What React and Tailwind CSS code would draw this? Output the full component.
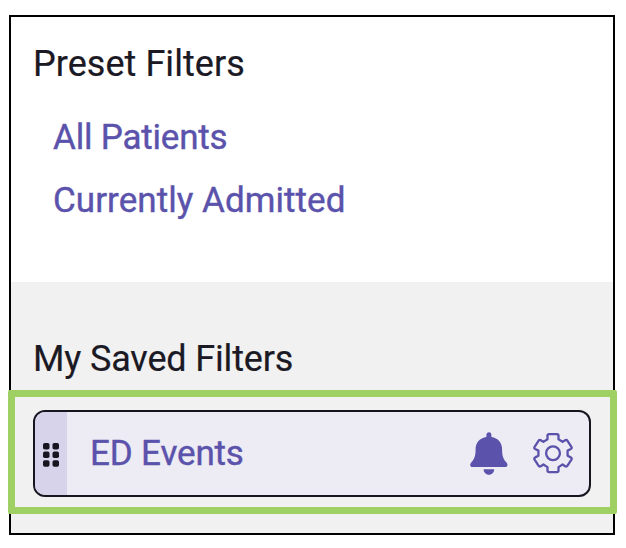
import clsx from "clsx";

const presetFilters = [
  { label: "All Patients", tracking: "tracking-[-0.2px]" },
  { label: "Currently Admitted", tracking: "tracking-[0.05px]" },
];

function DragHandle() {
  return (
    <div className="flex w-8 shrink-0 items-center justify-center bg-[#d6d3ea]">
      <svg width="16" height="24" viewBox="0 0 16 24" className="mt-[3px]" fill="#17151f">
        {[0, 8.6, 17.2].map((y) => (
          <g key={y}>
            <rect x="0" y={y} width="6.5" height="6.5" rx="1.8" />
            <rect x="9.5" y={y} width="6.5" height="6.5" rx="1.8" />
          </g>
        ))}
      </svg>
    </div>
  );
}

function BellIcon() {
  return (
    <svg width="38" height="44" viewBox="0 0 38 44" fill="currentColor">
      <path d="M19 0.3C17.3 0.3 16.4 1.6 16.4 3.2V5C9.8 6.1 5.6 10.6 5.6 17.2C5.6 23.8 4.4 27.1 1.2 30.6C0.5 31.4 0.2 32.2 0.2 33C0.2 34.3 1.1 35.1 2.5 35.1H35.1C36.5 35.1 37.5 34.3 37.5 33C37.5 32.2 37.2 31.4 36.5 30.6C33.2 27.1 32.1 23.8 32.1 17.2C32.1 10.6 28 6.1 21.4 5V3.2C21.4 1.6 20.6 0.3 19 0.3Z" />
      <path d="M13.6 37.2H24.2C24.2 40.3 21.8 42.7 18.9 42.7C16 42.7 13.6 40.3 13.6 37.2Z" />
    </svg>
  );
}

function GearIcon() {
  return (
    <svg width="42" height="42" viewBox="0 0 42 42" fill="none" stroke="currentColor" strokeWidth="2.3" strokeLinejoin="round">
      <path d="M15.5 6.3V2.8Q15.5 1.2 17.1 1.2H24.9Q26.5 1.2 26.5 2.8V6.3L30.6 8.9L33.2 7.2Q34.6 6.4 35.5 7.8L39.4 13.8Q40.2 15.2 38.8 16L35.6 17.6V22.8L38.8 24.4Q40.2 25.2 39.4 26.6L35.5 32.6Q34.6 34 33.2 33.2L30.6 31.5L26.5 34.1V37.6Q26.5 39.2 24.9 39.2H17.1Q15.5 39.2 15.5 37.6V34.1L11.4 31.5L8.8 33.2Q7.4 34 6.5 32.6L2.6 26.6Q1.8 25.2 3.2 24.4L6.4 22.8V17.6L3.2 16Q1.8 15.2 2.6 13.8L6.5 7.8Q7.4 6.4 8.8 7.2L11.4 8.9Z" />
      <circle cx="21" cy="20.2" r="6.9" />
    </svg>
  );
}

function SavedFilter({ name }) {
  return (
    <div className="flex h-[87px] w-[558px] overflow-hidden rounded-[12px] border-2 border-[#17151f] bg-[#edebf3]">
      <DragHandle />
      <div className="flex flex-1 items-center pr-[15px] pl-[23px] text-[#5a52ab]">
        <button className="h-[42px] text-[35px] leading-[42px] tracking-[-0.15px] [-webkit-text-stroke:0.4px]">
          {name}
        </button>
        <button className="ml-auto" aria-label="Notifications">
          <BellIcon />
        </button>
        <button className="ml-6" aria-label="Settings">
          <GearIcon />
        </button>
      </div>
    </div>
  );
}

export default function App() {
  return (
    <div className="h-[548px] w-[626px] overflow-hidden bg-white pt-[15px] pl-[9px] font-['Roboto','Liberation_Sans',sans-serif]">
      <div className="flex h-[520px] w-[606px] flex-col border-2 border-black">
        <section className="h-[265px] bg-white pt-[26px] pl-[22px]">
          <h2 className="text-[36px] leading-[42px] tracking-[0.05px] whitespace-nowrap text-[#1b1924] [-webkit-text-stroke:0.2px]">
            Preset Filters
          </h2>
          <ul className="mt-[32px] flex flex-col gap-[21px] pl-5">
            {presetFilters.map((filter) => (
              <li
                key={filter.label}
                className={clsx(
                  "text-[35px] leading-[42px] whitespace-nowrap text-[#5a52ab] [-webkit-text-stroke:0.4px]",
                  filter.tracking
                )}
              >
                {filter.label}
              </li>
            ))}
          </ul>
        </section>

        <section className="flex-1 bg-[#f1f1f1] pt-[56px]">
          <h2 className="pl-[22px] text-[36px] leading-[42px] tracking-[-0.15px] whitespace-nowrap text-[#1b1924] [-webkit-text-stroke:0.2px]">
            My Saved Filters
          </h2>
          <div className="mt-[10px] -ml-[3px] h-[124px] w-[609px] rounded-[2px] border-[7px] border-[#9fd063] bg-[#f1f1f1] pt-[13px] pl-[18px]">
            <SavedFilter name="ED Events" />
          </div>
        </section>
      </div>
    </div>
  );
}
